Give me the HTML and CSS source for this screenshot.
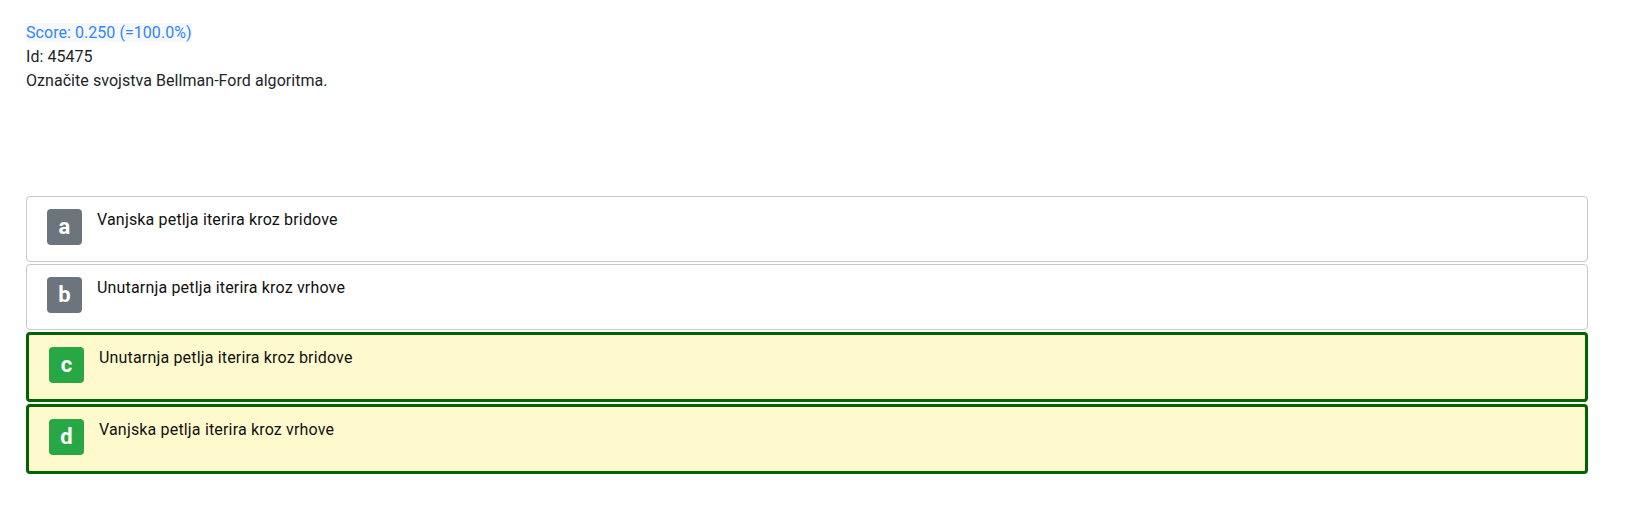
FILE: index.html
```html
<!DOCTYPE html>
<html lang="hr">
<head>
<meta charset="utf-8">
<title>Pitanje</title>
<link rel="stylesheet" href="styles.css">
</head>
<body>
<div class="page">
  <div class="meta">
    <div class="score"><span class="score-text">Score: 0.250 (=100.0%)</span></div>
    <div class="id">Id: 45475</div>
    <div class="question">Označite svojstva Bellman-Ford algoritma.</div>
  </div>
  <div class="answers">
    <div class="answer">
      <span class="badge">a</span>
      <span class="answer-text">Vanjska petlja iterira kroz bridove</span>
    </div>
    <div class="answer">
      <span class="badge">b</span>
      <span class="answer-text">Unutarnja petlja iterira kroz vrhove</span>
    </div>
    <div class="answer correct">
      <span class="badge">c</span>
      <span class="answer-text">Unutarnja petlja iterira kroz bridove</span>
    </div>
    <div class="answer correct">
      <span class="badge">d</span>
      <span class="answer-text">Vanjska petlja iterira kroz vrhove</span>
    </div>
  </div>
</div>
</body>
</html>
```

FILE: styles.css
```css
html, body {
  margin: 0;
  padding: 0;
  background: #ffffff;
}

body {
  font-family: Roboto, "Noto Sans", sans-serif;
  font-size: 16px;
  line-height: 24px;
  color: #212529;
}

.page {
  padding: 21px 43px 0 26px;
}

.meta {
  margin-bottom: 103px;
  letter-spacing: 0.05px;
}

.score-text {
  color: #2f86ff;
  background: #f6f8fb;
}

.answers {
  display: flex;
  flex-direction: column;
  gap: 2px;
}

.answer {
  display: flex;
  align-items: flex-start;
  gap: 15px;
  padding: 12px 20px 16px 20px;
  border: 1px solid #c8c8c8;
  border-radius: 4px;
  background: #ffffff;
}

.answer.correct {
  border: 3px solid #006400;
  background: #fffacd;
}

.badge {
  flex: none;
  width: 35px;
  height: 36px;
  border-radius: 4px;
  background: #6c757d;
  color: #ffffff;
  font-weight: 700;
  font-size: 22px;
  line-height: 36px;
  text-align: center;
}

.answer.correct .badge {
  background: #28a745;
}

.answer-text {
  color: #111;
  margin-top: -1px;
  letter-spacing: 0.17px;
}
```
